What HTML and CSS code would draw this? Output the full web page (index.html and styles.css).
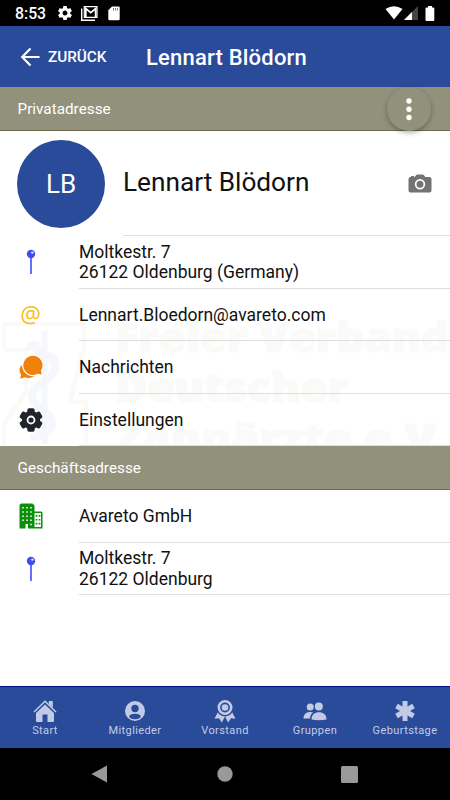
FILE: index.html
```html
<!DOCTYPE html>
<html lang="de">
<head>
    <meta charset="UTF-8">
    <meta name="viewport" content="width=device-width, initial-scale=1.0">
    <title>Lennart Blödorn</title>
    <link rel="stylesheet" href="styles.css">
</head>
<body>

    <div class="status-bar">
        <span class="clock">8:53</span>
        <svg class="status-gear" width="14" height="14" viewBox="2 2 20 20"><path fill="#fff" d="M19.43 12.98c.04-.32.07-.64.07-.98s-.03-.66-.07-.98l2.11-1.65c.19-.15.24-.42.12-.64l-2-3.46c-.12-.22-.39-.3-.61-.22l-2.49 1c-.52-.4-1.08-.73-1.69-.98l-.38-2.65C14.46 2.18 14.25 2 14 2h-4c-.25 0-.46.18-.49.42l-.38 2.65c-.61.25-1.17.59-1.69.98l-2.49-1c-.23-.09-.49 0-.61.22l-2 3.46c-.13.22-.07.49.12.64l2.11 1.65c-.04.32-.07.65-.07.98s.03.66.07.98l-2.11 1.65c-.19.15-.24.42-.12.64l2 3.46c.12.22.39.3.61.22l2.49-1c.52.4 1.08.73 1.69.98l.38 2.65c.03.24.24.42.49.42h4c.25 0 .46-.18.49-.42l.38-2.65c.61-.25 1.17-.59 1.69-.98l2.49 1c.23.09.49 0 .61-.22l2-3.46c.12-.22.07-.49-.12-.64l-2.11-1.65zM12 15.5c-1.93 0-3.5-1.57-3.5-3.5s1.57-3.5 3.5-3.5 3.5 1.57 3.5 3.5-1.57 3.5-3.5 3.5z"/></svg>
        <svg class="status-mail" width="17" height="15" viewBox="0 0 17 15">
            <path fill="none" stroke="#fff" stroke-width="1.4" d="M.7 2.5V14.3H14"/>
            <path fill="none" stroke="#fff" stroke-width="1.2" d="M3.3 .7H16V11.3H3.3Z"/>
            <path fill="none" stroke="#fff" stroke-width="1.7" d="M4.800 11V2.500L9.700 6.700 14.600 2.500V11"/>
        </svg>
        <svg class="status-sd" width="12" height="15" viewBox="0 0 12 15">
            <path fill="#fff" d="M4 .5H10.5Q11.7.5 11.7 1.7V13Q11.7 14.2 10.5 14.2H1.5Q.3 14.2 .3 13V4.2Z"/>
            <path stroke="#777" stroke-width="1" d="M5.5 2V4.5M7.5 2V4.5M9.5 2V4.5"/>
        </svg>
        <span class="spacer"></span>
        <svg class="status-wifi" width="18" height="14" viewBox="0 0 18 14"><path fill="#fff" d="M9 13.5.5 3Q9-2.5 17.5 3Z"/></svg>
        <svg class="status-signal" width="14" height="14" viewBox="0 0 14 14"><path fill="#444" d="M14 0V14H0Z"/><path fill="#fff" d="M8 6V14H0Z"/></svg>
        <svg class="status-battery" width="10" height="15" viewBox="0 0 10 15"><path fill="#fff" d="M3 0H7V1.5H8.5Q9.3 1.5 9.3 2.3V14Q9.3 15 8.3 15H1.5Q.5 15 .5 14V2.3Q.5 1.5 1.5 1.5H3Z"/></svg>
    </div>

    <header class="toolbar">
        <a class="back">
            <svg width="20" height="20" viewBox="0 0 20 20"><path d="M10.500 1.500 2.200 10 10.500 18.500M2.200 10H19.500" fill="none" stroke="#fff" stroke-width="2.2"/></svg>
            <span>ZURÜCK</span>
        </a>
        <h1>Lennart Blödorn</h1>
    </header>

    <main>
        <div class="section-title">
            <span>Privatadresse</span>
            <button class="fab" aria-label="Mehr">
                <svg width="6" height="24" viewBox="0 0 6 24" fill="#fff"><circle cx="3" cy="4" r="2.7"/><circle cx="3" cy="12.300" r="2.7"/><circle cx="3" cy="20.500" r="2.7"/></svg>
            </button>
        </div>

        <section class="private">
            <!-- faded association logo behind the list -->
            <svg class="watermark" width="450" height="130" viewBox="0 0 450 130">
                <path fill="none" stroke="#fbfaf8" stroke-width="4.500" d="M4 34V8H84V31L70 86H86V130M4 34H26V76L4 109V130"/>
                <g fill="none" stroke="#f5f7fd" stroke-linecap="round">
                    <path stroke-width="6" stroke-linecap="butt" d="M44.500 15V128"/>
                    <path stroke-width="5" d="M28 33Q36 29 38 36"/>
                    <path stroke-width="8" d="M38 35C42 42 55 36 55 50C55 65 32 67 32 80C32 93 52 94 52 107C52 115 45 119 34 121"/>
                </g>
                <ellipse cx="34" cy="29.500" rx="6.500" ry="5" fill="#f5f7fd"/>
                <g class="watermark-text">
                    <text x="115" y="35.500" textLength="334" lengthAdjust="spacingAndGlyphs">Freier Verband</text>
                    <text x="115" y="86" textLength="233" lengthAdjust="spacingAndGlyphs">Deutscher</text>
                    <text x="115" y="137" textLength="334" lengthAdjust="spacingAndGlyphs">Zahnärzte e.V.</text>
                </g>
            </svg>

            <div class="profile">
                <div class="avatar">LB</div>
                <div class="profile-inner">
                    <h2>Lennart Blödorn</h2>
                    <svg width="24" height="19" viewBox="0 0 24 19"><path fill="#737373" fill-rule="evenodd" d="M2.500 3H3V2H6V3H6.700L8 1.200Q8.600.5 9.500.5H14.500Q15.400.5 16 1.200L17.300 3H21.500Q23.500 3 23.500 5V16.500Q23.500 18.500 21.500 18.500H2.500Q.5 18.500.5 16.500V5Q.5 3 2.500 3ZM12 5A5.200 5.200 0 1 0 12 15.400A5.200 5.200 0 1 0 12 5ZM12 6.700A3.500 3.500 0 1 1 12 13.700A3.500 3.500 0 1 1 12 6.700Z"/></svg>
                </div>
            </div>

            <div class="row">
                <svg class="pin" width="10" height="26" viewBox="0 0 10 26"><path d="M5 8V25" stroke="#3340ff" stroke-width="1.500"/><circle cx="5" cy="5" r="4.200" fill="#3f4fee"/><circle cx="6.400" cy="3.600" r="1.200" fill="#dfe2ff"/></svg>
                <p>Moltkestr. 7<br>26122 Oldenburg (Germany)</p>
            </div>
            <div class="row">
                <span class="at">@</span>
                <p>Lennart.Bloedorn@avareto.com</p>
            </div>
            <div class="row">
                <svg width="24" height="24" viewBox="0 0 24 24" fill="#ef820b">
                    <path d="M4 9C-.3 12-.3 16.500 2 19.500L1.300 23.700L6 22.300C9 23.400 13 23 15.500 21Z"/>
                    <path stroke="#fff" stroke-width="1.300" d="M13.800 0A10.300 10.300 0 0 1 22.700 15.500L23.600 20.400L18.800 19.400A10.300 10.300 0 1 1 13.800 0Z"/>
                </svg>
                <p>Nachrichten</p>
            </div>
            <div class="row">
                <svg width="24" height="24" viewBox="0 0 24 24">
                    <g fill="#20242b"><circle cx="12" cy="12" r="9.200"/><rect x="8.300" y=".3" width="7.400" height="23.400" rx="1.800"/><rect x="8.300" y=".3" width="7.400" height="23.400" rx="1.800" transform="rotate(60 12 12)"/><rect x="8.300" y=".3" width="7.400" height="23.400" rx="1.800" transform="rotate(120 12 12)"/></g>
                    <circle cx="12" cy="12" r="3.500" fill="none" stroke="#fff" stroke-width="1.800"/>
                </svg>
                <p>Einstellungen</p>
            </div>
        </section>

        <div class="section-title">
            <span>Geschäftsadresse</span>
        </div>

        <section>
            <div class="row">
                <svg width="24" height="26" viewBox="0 0 24 26">
                    <path fill="#089108" d="M2 .5H13.500L15.500 2.500V8.500H22Q23.500 8.500 23.500 10V25.500H9V21H6.500V25.500H.5V2Z"/>
                    <path fill="#fff" d="M15.500 10H22V24H15.500Z"/>
                    <g fill="none" stroke-width="1.500"><path stroke="#fff" stroke-dasharray="1.500 2.700" d="M4 4V19.500M8 4V19.500M12 4V22.500"/><path stroke="#089108" stroke-width="1.700" stroke-dasharray="1.700 2.200" d="M17.500 12V23M20.500 12V23"/></g>
                </svg>
                <p>Avareto GmbH</p>
            </div>
            <div class="row">
                <svg class="pin" width="10" height="26" viewBox="0 0 10 26"><path d="M5 8V25" stroke="#3340ff" stroke-width="1.500"/><circle cx="5" cy="5" r="4.200" fill="#3f4fee"/><circle cx="6.400" cy="3.600" r="1.200" fill="#dfe2ff"/></svg>
                <p>Moltkestr. 7<br>26122 Oldenburg</p>
            </div>
        </section>
    </main>

    <nav class="tabs">
        <a>
            <svg width="24" height="24" viewBox="0 0 24 24"><path fill="#c2cbe6" d="M12 5.500 21 14V22Q21 23 20 23H14.500V15.500H9.500V23H4Q3 23 3 22V14Z"/><path fill="none" stroke="#c2cbe6" stroke-width="1.500" d="M1 13 12 2.300 23 13"/><path fill="#c2cbe6" d="M15.800 2H19.800V9L15.800 5Z"/></svg>
            <span>Start</span>
        </a>
        <a>
            <svg width="24" height="24" viewBox="0 0 24 24"><circle cx="12" cy="12" r="10" fill="#c2cbe6"/><circle cx="12" cy="9.500" r="3.700" fill="#2a4b9a"/><ellipse cx="12" cy="17.500" rx="5.700" ry="2.700" fill="#2a4b9a"/></svg>
            <span>Mitglieder</span>
        </a>
        <a>
            <svg width="24" height="24" viewBox="0 0 24 24"><path fill="#c2cbe6" d="M5.500 12 1.500 19.800 6 19.300 8.800 23.500 12 17.500 15.200 23.500 18 19.300 22.500 19.800 18.500 12Z"/><circle cx="12" cy="8.500" r="8.900" fill="#2a4b9a"/><circle cx="12" cy="8.500" r="7.500" fill="#c2cbe6"/><circle cx="12" cy="8.500" r="4.100" fill="none" stroke="#2a4b9a" stroke-width="1.600"/></svg>
            <span>Vorstand</span>
        </a>
        <a>
            <svg width="24" height="24" viewBox="0 0 24 24" fill="#c2cbe6"><circle cx="7.200" cy="8" r="3.500"/><path d="M.5 19.500C.5 14.500 4 13 7.500 13Q9 13 10.200 13.400Q7.300 15 7 19.500Z"/><circle cx="15.800" cy="7.400" r="4"/><path d="M8.500 20.500C8.500 15.500 12 13.300 16 13.300S23.500 15.500 23.500 20.500Q19.500 21.200 16 21.200T8.500 20.500Z"/></svg>
            <span>Gruppen</span>
        </a>
        <a>
            <svg width="24" height="24" viewBox="0 0 24 24"><path stroke="#c2cbe6" stroke-width="5" d="M12 2V22M3.500 7 20.500 17M20.500 7 3.500 17"/></svg>
            <span>Geburtstage</span>
        </a>
    </nav>

    <div class="system-nav">
        <svg width="17" height="18" viewBox="0 0 17 18"><path fill="#999" d="M16 .5V17.500L.5 9Z"/></svg>
        <svg width="16" height="16" viewBox="0 0 16 16"><circle cx="8" cy="8" r="7.700" fill="#999"/></svg>
        <svg width="17" height="17" viewBox="0 0 17 17"><rect width="17" height="17" rx="1.500" fill="#999"/></svg>
    </div>

</body>
</html>
```
FILE: styles.css
```css
* {
    box-sizing: border-box;
}

body {
    display: flex;
    flex-direction: column;
    height: 800px;
    margin: 0;
    overflow: hidden;
    font-family: Roboto, sans-serif;
    color: #111;
    background: #fff;
}

svg {
    display: block;
    flex: none;
}

h1, h2, p {
    margin: 0;
    font-weight: 400;
    white-space: nowrap;
}

/* Android status bar */
.status-bar {
    display: flex;
    align-items: center;
    height: 26px;
    padding: 0 15px;
    color: #fff;
    background: #000;
    flex: none;
}

.clock {
    width: 43px;
    font-size: 15.8px;
    font-weight: 500;
    line-height: 28px;
    padding-top: 1px;
}

.status-mail { margin-left: 9px; }
.status-sd { margin-left: 10px; }
.spacer { flex: 1; }
.status-signal { margin-left: 1px; }
.status-battery { margin: 0 0 0 7px; }

/* Header */
.toolbar {
    display: flex;
    align-items: center;
    height: 61px;
    padding-left: 20px;
    color: #fff;
    background: #2a4b9a;
    flex: none;
}

.back {
    display: flex;
    align-items: center;
    gap: 8px;
    width: 126px;
    font-size: 15.3px;
    font-weight: 500;
}

.toolbar h1 {
    font-size: 22px;
    font-weight: 500;
    letter-spacing: 0.2px;
    padding-top: 1px;
}

main {
    flex: 1;
    min-height: 0;
}

.section-title {
    display: flex;
    align-items: center;
    justify-content: space-between;
    height: 44px;
    padding: 0 19px 0 17.5px;
    font-size: 15.3px;
    color: #fff;
    background: #92917c;
    border-bottom: 1px solid #6f6c4e;
}

.fab {
    display: flex;
    align-items: center;
    justify-content: center;
    width: 44px;
    height: 44px;
    padding: 0;
    border: 0;
    border-radius: 50%;
    background: #92917c;
    box-shadow: 0 2px 5px rgba(0, 0, 0, 0.3);
}

/* Address list */
.private {
    position: relative;
    height: 315px;
    overflow: hidden;
}

.watermark {
    position: absolute;
    left: 0;
    bottom: 0;
    z-index: -1;
}

.watermark-text {
    font-family: "Open Sans", sans-serif;
    font-size: 40px;
    font-weight: 800;
    fill: #fafaf8;
    stroke: #fafaf8;
    stroke-width: 1px;
}

.profile {
    display: flex;
    height: 105px;
    padding-left: 17px;
}

.avatar {
    display: flex;
    align-items: center;
    justify-content: center;
    width: 88px;
    height: 88px;
    margin: 9px 18px 0 0;
    border-radius: 50%;
    font-size: 26px;
    color: #fff;
    background: #2a4b9a;
}

.profile-inner {
    display: flex;
    flex: 1;
    align-items: center;
    justify-content: space-between;
    padding: 0 18px 0 0;
    border-bottom: 1px solid #dedede;
}

.profile-inner h2 {
    padding-bottom: 2px;
    font-size: 26.2px;
}

.row {
    display: grid;
    grid-template-columns: 61px 1fr;
    justify-items: center;
    align-items: center;
    height: 52.5px;
}

.row p {
    display: flow-root;
    align-self: stretch;
    justify-self: stretch;
    align-content: center;
    margin-left: 18px;
    padding-top: 1px;
    font-size: 17.5px;
    line-height: 20.5px;
    border-bottom: 1px solid #dedede;
}

.at {
    padding-bottom: 1px;
    font-family: "Open Sans", sans-serif;
    font-size: 23px;
    line-height: 24px;
    color: #f9bd17;
}

/* Bottom tabs */
.tabs {
    display: grid;
    grid-template-columns: repeat(5, 1fr);
    height: 62px;
    color: #c2cbe6;
    background: #2a4b9a;
    border-top: 1px solid #00127f;
    flex: none;
}

.tabs a {
    display: flex;
    flex-direction: column;
    align-items: center;
    padding-top: 12px;
    font-size: 11px;
    line-height: 15px;
    letter-spacing: 0.4px;
}

.system-nav {
    display: flex;
    align-items: center;
    justify-content: space-between;
    height: 52px;
    padding: 0 92px 0 91px;
    background: #000;
    flex: none;
}
```
